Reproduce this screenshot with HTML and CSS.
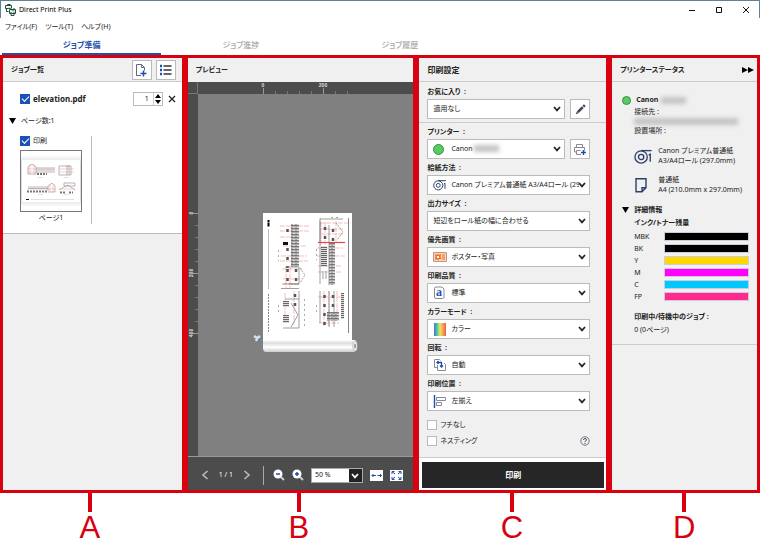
FILE: index.html
```html
<!DOCTYPE html>
<html lang="ja">
<head>
<meta charset="utf-8">
<title>Direct Print Plus</title>
<link rel="stylesheet" href="styles.css">
</head>
<body>
<svg class="defs" aria-hidden="true">
  <symbol id="chevron" viewBox="0 0 8 6"><path d="M1 1l3 3.400L7 1" fill="none" stroke="currentColor" stroke-width="1.700"/></symbol>
  <symbol id="roll" viewBox="0 0 20 17"><g fill="none" stroke="currentColor" stroke-width="1.400"><circle cx="7.500" cy="9" r="6.500"/><circle cx="7.500" cy="9" r="2.800"/><path d="M7.500 2.300H18.500"/><path d="M15.500 7l1.600-1v8"/></g></symbol>
</svg>
<header class="titlebar">
  <svg class="logo" width="11" height="12" viewBox="0 0 11 12"><g fill="#fff" stroke="#244b3c" stroke-width="1"><path d="M.5 1.500h6v3h-6zM1.500 4.500v3h2M5.500.5h-3v1"/><path d="M4.500 5.500h6v4h-6zM6 4v1.500h3V4M6 8v3.500h3V8"/></g><path d="M3.500 4.200h3M6.500 6.800h3" stroke="#2aa66a"/></svg>
  <h1>Direct Print Plus</h1>
  <div class="winbtns">
    <button aria-label="最小化"><svg width="10" height="10"><path d="M2 5.500h6" stroke="#111"/></svg></button>
    <button aria-label="最大化"><svg width="10" height="10"><path d="M2.500 2.500h5v5h-5z" fill="none" stroke="#111"/></svg></button>
    <button aria-label="閉じる"><svg width="10" height="10"><path d="M2 2l6 6M8 2L2 8" stroke="#111"/></svg></button>
  </div>
</header>
<nav class="menubar"><button>ファイル(F)</button><button>ツール(T)</button><button>ヘルプ(H)</button></nav>
<nav class="tabs"><a class="on" href="#jobs">ジョブ準備</a><a href="#progress">ジョブ進捗</a><a href="#history">ジョブ履歴</a></nav>

<main class="panels">
  <section class="panel jobs" id="jobs">
    <div class="head"><h2>ジョブ一覧</h2>
      <button class="tool" aria-label="ファイルを追加"><svg width="13" height="14" viewBox="0 0 13 14"><path d="M6 12.500H1.500v-11h5l3 3v3M6.500 1.500v3h3" fill="none" stroke="#667" /><path d="M8.500 7.500v6M5.500 10.500h6" stroke="#1b4fae" stroke-width="1.500"/></svg></button>
      <button class="tool" aria-label="一覧表示"><svg width="13" height="12" viewBox="0 0 13 12"><path d="M1 2h2M1 6h2M1 10h2" stroke="#1b4fae" stroke-width="2.500"/><path d="M4.500 2h8M4.500 6h8M4.500 10h8" stroke="#333" stroke-width="1.500"/></svg></button>
    </div>
    <div class="joblist">
      <div class="job"><label class="check"><input type="checkbox" checked><b>elevation.pdf</b></label>
        <div class="spin"><input type="text" value="1" aria-label="部数"><span class="arrows"><button aria-label="増やす"><svg width="6" height="4"><path d="M0 4l3-4 3 4z"/></svg></button><button aria-label="減らす"><svg width="6" height="4"><path d="M0 0l3 4 3-4z"/></svg></button></span></div>
        <button class="plain" aria-label="削除"><svg width="8" height="8"><path d="M1 1l6 6M7 1L1 7" stroke="#222" stroke-width="1.300"/></svg></button>
      </div>
      <button class="fold"><svg width="7" height="6"><path d="M0 0h7L3.500 6z"/></svg><span>ページ数:1</span></button>
      <figure class="page">
        <label class="check"><input type="checkbox" checked>印刷</label>
        <svg class="thumb" viewBox="0 0 60 60">
          <defs><linearGradient id="sh" x2="0" y2="1"><stop stop-color="#fff"/><stop offset=".16" stop-color="#ddd"/><stop offset=".84" stop-color="#ddd"/><stop offset="1" stop-color="#fff"/></linearGradient></defs>
          <path fill="#fff" d="M0 0h60v60H0z"/><path fill="url(#sh)" d="M0 4h60v52H0z"/><path fill="#fff" d="M1 9h58v42H1z"/>
          <g fill="none" stroke="#999" stroke-width=".7"><path d="M7 23v-7l4-3 4 3v7zM15 17h19M15 19h19M15 21h19M38 15h12v9H38zM46 14v10M48 14v10M7 36h20M7 37.500h20M27 40v-5l4-3 3 3v6h-7M38 39l5-3 4-2 7 5M43 32h11v3H43z"/></g>
          <path d="M16 23h10M6 40.500h20M39 41.500h5M48 41.500h4" stroke="#777" stroke-width="2" stroke-dasharray="2 1"/>
          <path d="M6 18h28M6 21h9M38 18h15M38 21h15M6 38h28M38 38h16M9 13v10M13 13v10M29 33v8M32 33v8" stroke="#e99" stroke-width=".5"/>
          <path d="M5 48.500h3" stroke="#111"/><path d="M10 48.500h43M17 26.500h5M43 26.500h5M17 43.500h5M43 43.500h5" stroke="#ccc" stroke-width=".6"/>
        </svg>
        <figcaption>ページ1</figcaption>
      </figure>
    </div>
  </section>

  <section class="panel preview">
    <div class="head"><h2>プレビュー</h2></div>
    <div class="stage">
      <div class="corner"></div>
      <svg class="ruler-x" width="100%" height="12"><path d="M65.500 6v6M125.500 6v6" stroke="#999"/><path d="M77.500 9v3M89.500 9v3M101.500 9v3M113.500 9v3M137.500 9v3M149.500 9v3" stroke="#777"/><g class="marks"><text x="65" y="5">0</text><text x="125" y="5">200</text></g></svg>
      <svg class="ruler-y" width="10" height="100%"><path d="M5 119.500h5M5 179.500h5M5 239.500h5" stroke="#999"/><path d="M7 131.500h3M7 143.500h3M7 155.500h3M7 167.500h3M7 191.500h3M7 203.500h3M7 215.500h3M7 227.500h3" stroke="#777"/><g class="marks"><text transform="translate(5 119) rotate(-90)">0</text><text transform="translate(5 179) rotate(-90)">200</text><text transform="translate(5 239) rotate(-90)">400</text></g></svg>
      <svg class="canvas" width="100%" height="100%" role="img" aria-label="用紙">
        <defs>
          <linearGradient id="rollg" x2="0" y2="1"><stop stop-color="#fff"/><stop offset=".25" stop-color="#ddd"/><stop offset=".6" stop-color="#fff"/><stop offset="1" stop-color="#ccc"/></linearGradient>
          <pattern id="brick" width="4" height="3" patternUnits="userSpaceOnUse"><path fill="#ddd" d="M0 0h4v3H0z"/><path d="M0 .5h4M1 0v3M3 1v1" stroke="#555" stroke-width=".7"/></pattern>
          <pattern id="rows" width="6" height="2" patternUnits="userSpaceOnUse"><path fill="#ddd" d="M0 0h6v2H0z"/><path d="M0 .5h6" stroke="#666" stroke-width="1"/></pattern>
        </defs>
        <g transform="translate(65 119)">
          <path fill="#fff" d="M0 0h89v130H0z"/>
          <path d="M5.500 7v2M5.500 9.500v4" stroke="#000" stroke-width="2"/>
          <path d="M5.500 16v60" stroke="#aaa" stroke-width=".8"/><path d="M5.500 81v38" stroke="#888" stroke-dasharray="2 1"/>
          <path d="M85.500 5v115" stroke="#666" stroke-width=".8"/>
          <g fill="none" stroke="#f4a3a3" stroke-width=".7" stroke-dasharray="5 1"><path d="M17 13h29M17 18h29M17 24h20M20 33h24M18 43h26M17 48h28M19 56h20M20 66h18M19 71h18M23 55v20M27 55v20M31 78v34M22 80v28M57 10h28M57 16h24M57 21h24M54 35h26M54 43h28M55 53h24M55 59h24M58 9v24M62 9v24M73 8v22M61 78v36M66 78v36M74 78v30M55 84h24M56 110h20"/></g>
          <path d="M55 29.500h27" stroke="#e44" stroke-width="1.200"/>
          <path fill="url(#brick)" d="M28 11h8v43h-8zM66 30h6v42h-6zM64 99h12v9H64z"/>
          <path fill="url(#rows)" d="M58 33h6v21h-6zM78 80h3v26h-3zM20 88h6v6h-6zM20 102h6v8h-6z"/>
          <path fill="#111" d="M20 29h5v3h-5z"/>
          <path fill="none" stroke="#555" stroke-width="2.500" stroke-dasharray="3 6" d="M24.500 16v4M24.500 35v20M24.500 56v13M33 56v14M62 14v14M70 16v12M61.500 82v32M70 82v18M32 81v18"/>
          <g fill="none" stroke="#777" stroke-width=".7"><path d="M22 54h14v17H20M36 78v37H20"/><path stroke-dasharray="2 1" d="M37 55l5 7-5 8M73 10l7 9-6 8"/><path d="M36 71H26M18 75.500h18M22 86h14M28 90l7 12-7 12M57 8v21M66 12v60M57 6h23M66 78v36M71 78v36M57 78v32M57 5v66M60 58v8M63 58v8"/></g>
          <path d="M15.500 37v11M41.500 86v28M53.500 36v11M15.500 92v10M53.500 92v10M68 4.500h10" stroke="#aaa" stroke-width="1" stroke-dasharray="2 3"/>
          <path fill="url(#rollg)" d="M0 127h92q2 1 2 6t-3 6H3q-3 0-3-4z"/>
          <ellipse cx="92" cy="133" rx="2.200" ry="5" fill="#eee" stroke="#aaa" stroke-width=".6"/><ellipse cx="92" cy="133" rx=".8" ry="2.500" fill="#888"/>
          <path d="M-9 123l3 2M-3 123l-4 3M-7 126l1 2" stroke="#cfe4fa" stroke-width="2.500"/>
        </g>
      </svg>
    </div>
    <div class="zoombar">
      <button class="plain pg" aria-label="前のページ"><svg width="8" height="10"><path d="M6.500 1L2 5l4.500 4" fill="none" stroke="#bbb" stroke-width="1.600"/></svg></button>
      <span class="count">1 / 1</span>
      <button class="plain pg" aria-label="次のページ"><svg width="8" height="10"><path d="M1.500 1L6 5 1.500 9" fill="none" stroke="#bbb" stroke-width="1.600"/></svg></button>
      <i class="sep"></i>
      <button class="plain" aria-label="縮小"><svg width="12" height="12"><path d="M8 8l3 3" stroke="#ccc" stroke-width="2"/><circle cx="5" cy="5" r="4.500" fill="#fff"/><path d="M3 5h4" stroke="#1b4fae" stroke-width="1.500"/></svg></button>
      <button class="plain" aria-label="拡大"><svg width="12" height="12"><path d="M8 8l3 3" stroke="#ccc" stroke-width="2"/><circle cx="5" cy="5" r="4.500" fill="#fff"/><path d="M3 5h4M5 3v4" stroke="#1b4fae" stroke-width="1.500"/></svg></button>
      <span class="zoomsel"><select aria-label="倍率"><option>50 %</option></select><svg class="zchev" width="8" height="6"><use href="#chevron"/></svg></span>
      <button class="plain fit" aria-label="幅に合わせる"><svg width="13" height="11"><path fill="#fff" d="M0 0h13v11H0z"/><path d="M2 5.500h4M7.500 5.500h4M3.500 4L2 5.500 3.500 7M10 4l1.500 1.500L10 7" fill="none" stroke="#1b4fae"/></svg></button>
      <button class="plain" aria-label="全体表示"><svg width="13" height="11"><path fill="#fff" d="M0 0h13v11H0z"/><path d="M2 4V1.500h2.500M2 1.500l3 2.500M11 4V1.500H8.500M11 1.500L8 4M2 7v2.500h2.500M2 9.500L5 7M11 7v2.500H8.500M11 9.500L8 7" fill="none" stroke="#1b4fae"/></svg></button>
    </div>
  </section>

  <section class="panel settings">
    <div class="head"><h2>印刷設定</h2></div>
    <div class="group first">
      <label for="fav">お気に入り&ensp;:</label>
      <div class="row"><span class="sel"><select id="fav"><option>適用なし</option></select><svg class="chev" width="8" height="6"><use href="#chevron"/></svg></span>
      <button class="tool" aria-label="編集"><svg width="11" height="11"><path d="M.8 10.200l1-2.800 1.800 1.800z" fill="#444"/><path d="M2.800 8.200l5-5M8.400 2.600l1.400-1.400" stroke="#445" stroke-width="2.600"/></svg></button></div>
    </div>
    <div class="group">
      <label for="prn">プリンター&ensp;:</label>
      <div class="row"><span class="sel ic"><i class="dot ico"></i><select id="prn"><option>Canon</option></select><i class="mask short"></i><svg class="chev" width="8" height="6"><use href="#chevron"/></svg></span>
      <button class="tool" aria-label="プリンターを追加"><svg width="14" height="13"><path d="M3.500 4.500v-3h6v3M3.500 9h-2V4.500h10v3M3.500 7.500v4h4.500M3.500 7.500h4" fill="none" stroke="#889"/><path d="M10.500 7v5M8 9.500h5" stroke="#1b4fae" stroke-width="1.400"/></svg></button></div>
      <label for="feed">給紙方法&ensp;:</label>
      <span class="sel ic"><svg class="ico navy" width="14" height="12"><use href="#roll"/></svg><select id="feed"><option>Canon プレミアム普通紙 A3/A4ロール (29</option></select><svg class="chev" width="8" height="6"><use href="#chevron"/></svg></span>
      <label for="size">出力サイズ&ensp;:</label>
      <span class="sel"><select id="size"><option>短辺をロール紙の幅に合わせる</option></select><svg class="chev" width="8" height="6"><use href="#chevron"/></svg></span>
      <label for="prio">優先画質&ensp;:</label>
      <span class="sel ic"><svg class="ico" width="14" height="12"><path fill="#fbd3b8" stroke="#b98" d="M.5 1.500h13v9H.5z"/><path fill="#f2691d" d="M2 3l2 1 1-1.500L6 4l2-1-.5 3L8.500 8 6 8 5 9.500 4 8 2 9l.5-3z"/><circle cx="5" cy="6" r="1.200" fill="#fff"/><path fill="#f6a06a" d="M9 3h3v6H9z"/></svg><select id="prio"><option>ポスター・写真</option></select><svg class="chev" width="8" height="6"><use href="#chevron"/></svg></span>
      <label for="qual">印刷品質&ensp;:</label>
      <span class="sel ic"><svg class="ico" width="14" height="14"><path fill="#fff" stroke="#889" d="M1.500 2.500q0-1.500 1.500-1.500h6l2 2v8q0 1.500-1.500 1.500H3q-1.500 0-1.500-1.500z"/><text x="3" y="10" font-family="Liberation Serif" font-weight="700" font-size="12" fill="#1b4fae">a</text></svg><select id="qual"><option>標準</option></select><svg class="chev" width="8" height="6"><use href="#chevron"/></svg></span>
      <label for="color">カラーモード&ensp;:</label>
      <span class="sel ic"><svg class="ico" width="14" height="13"><defs><linearGradient id="rb"><stop stop-color="#4a6fe0"/><stop offset=".25" stop-color="#4cc7a0"/><stop offset=".5" stop-color="#e8e860"/><stop offset=".75" stop-color="#f7a050"/><stop offset="1" stop-color="#ee5a50"/></linearGradient></defs><path fill="url(#rb)" d="M1 0h12v13H1z"/></svg><select id="color"><option>カラー</option></select><svg class="chev" width="8" height="6"><use href="#chevron"/></svg></span>
      <label for="rot">回転&ensp;:</label>
      <span class="sel ic"><svg class="ico" width="14" height="14"><path d="M4 9.500H1.500v-8h5l1 1" fill="none" stroke="#889"/><path d="M4.500 7v5.500h8v-6l-1.500-1.500" fill="none" stroke="#889"/><path d="M4 4.500h4.500V9M5.500 3L4 4.500 5.500 6M7 7.500L8.500 9 10 7.500" fill="none" stroke="#1b4fae" stroke-width="1.300"/></svg><select id="rot"><option>自動</option></select><svg class="chev" width="8" height="6"><use href="#chevron"/></svg></span>
      <label for="pos">印刷位置&ensp;:</label>
      <span class="sel ic"><svg class="ico" width="14" height="13"><path d="M1.500 0v13" stroke="#1b4fae" stroke-width="1.400"/><path d="M3.500 2.500h9v3h-9zM3.500 7.500h5v3h-5z" fill="#fff" stroke="#889"/></svg><select id="pos"><option>左揃え</option></select><svg class="chev" width="8" height="6"><use href="#chevron"/></svg></span>
      <div class="opts">
        <label class="check"><input type="checkbox">フチなし</label>
        <label class="check"><input type="checkbox">ネスティング</label>
        <button class="plain help" aria-label="ヘルプ"><svg width="10" height="10"><circle cx="5" cy="5" r="4.200" fill="none" stroke="#667" stroke-width=".9"/><path d="M3.500 4q0-1.500 1.500-1.500T6.500 4Q6.500 4.700 5 5.500v.7M5 7v1" fill="none" stroke="#556" stroke-width="1"/></svg></button>
      </div>
    </div>
    <div class="printrow"><button class="print">印刷</button></div>
  </section>

  <section class="panel status">
    <div class="head"><h2>プリンターステータス</h2><button class="plain" aria-label="たたむ"><svg width="12" height="6"><path d="M0 0l6 3-6 3zM6 0l6 3-6 3z"/></svg></button></div>
    <div class="info">
      <div class="name"><i class="dot"></i><b>Canon</b><i class="mask short"></i></div>
      <p>接続先 :</p>
      <i class="mask long"></i>
      <p>設置場所 :</p>
      <div class="media"><svg class="navy" width="19" height="17"><use href="#roll"/></svg><p>Canon プレミアム普通紙<br>A3/A4ロール (297.0mm)</p></div>
      <div class="media"><svg class="navy" width="19" height="17" viewBox="0 0 19 17"><path d="M2 1.700h10v9l-4 4H2zM12 10.700H8v4" fill="none" stroke="currentColor" stroke-width="1.400"/></svg><p>普通紙<br>A4 (210.0mm x 297.0mm)</p></div>
      <button class="fold"><svg width="7" height="6"><path d="M0 0h7L3.500 6z"/></svg><b>詳細情報</b></button>
      <h3>インク/トナー残量</h3>
      <dl class="inks">
        <dt>MBK</dt><dd class="k"></dd><dt>BK</dt><dd class="k"></dd><dt>Y</dt><dd class="y"></dd><dt>M</dt><dd class="m"></dd><dt>C</dt><dd class="c"></dd><dt>FP</dt><dd class="fp"></dd>
      </dl>
      <h3>印刷中/待機中のジョブ :</h3>
      <p>0 (0ページ)</p>
    </div>
  </section>
</main>
<footer class="callouts"><span>A</span><span>B</span><span>C</span><span>D</span></footer>
</body>
</html>
```
FILE: styles.css
```css
* { box-sizing: border-box; }
body {
  margin: 0;
  background: #fff;
  color: #222;
  font: 7px/12px "Noto Sans", "Noto Sans CJK JP", sans-serif;
  font-feature-settings: "palt";
}
h1, h2, h3, p, dl, dd, figure { margin: 0; }
button, input, select { font: inherit; font-feature-settings: inherit; color: inherit; margin: 0; }
button { padding: 0; border: 0; background: none; white-space: nowrap; }
svg { display: block; flex: none; }
.defs { position: absolute; width: 0; height: 0; }
.navy { color: #2b4168; }

.titlebar { display: flex; align-items: center; height: 18px; padding: 0 5px 0 4px; border: 1px solid #5f8299; border-bottom: 0; }
.titlebar h1 { flex: 1; margin-left: 3px; font-size: 7px; font-weight: 400; color: #000; }
.winbtns { display: flex; gap: 17px; margin-right: 3px; }
.menubar { display: flex; gap: 8px; height: 18px; padding-left: 5px; }
.tabs { display: flex; height: 19px; padding-left: 2px; }
.tabs a { width: 21%; text-align: center; line-height: 17px; font-size: 8px; font-weight: 500; text-decoration: none; color: #aaa; }
.tabs .on { color: #2450a8; border-bottom: 2px solid #2450a8; font-weight: 700; }

.panels { display: grid; grid-template-columns: 179fr 226fr 187fr 145fr; gap: 6px; padding: 3px; background: #d9000f; }
.panel { display: flex; flex-direction: column; min-width: 0; background: #f0f0f0; }
.head { display: flex; align-items: center; gap: 4px; height: 24px; padding: 0 7px 0 8px; border-bottom: 1px solid #ccc; }
.head h2 { flex: 1; font-size: 7px; font-weight: 700; white-space: nowrap; }
.settings .head h2 { font-size: 8px; }
.tool { display: grid; place-items: center; flex: none; width: 20px; height: 20px; border: 1px solid #bbb; background: #fff; }
.plain { display: grid; place-items: center; flex: none; }

.check { display: flex; align-items: center; gap: 3px; }
.check input { appearance: none; width: 10px; height: 10px; border: 1px solid #bbb; background: #fff; }
.check input:checked { display: grid; place-items: center; border: 0; background: #1c52b8; }
.check input:checked::after { content: ""; width: 6px; height: 3px; border: solid #fff; border-width: 0 0 1px 1px; rotate: -45deg; translate: 0 -1px; }
.fold { display: flex; align-items: center; gap: 5px; height: 12px; }
.jobs .head { padding-right: 6px; }
.joblist { height: 152px; padding: 9px 6px 0; background: #fff; border-bottom: 1px solid #bbb; }
.job { display: flex; align-items: center; height: 16px; padding-left: 11px; margin-bottom: 8px; }
.job .check { flex: 1; font-size: 8px; }
.spin { display: flex; width: 30px; height: 14px; border: 1px solid #bbb; margin-right: 5px; }
.spin input { flex: 1; min-width: 0; border: 0; padding: 0 4px; text-align: right; }
.arrows { display: flex; flex-direction: column; justify-content: space-around; width: 9px; border-left: 1px solid #ccc; padding-left: 1px; }
.page { width: 83px; height: 88px; margin-top: 9px; padding-left: 11px; border-right: 1px solid #bbb; }
.page .check { height: 10px; }
.thumb { width: 62px; height: 62px; margin-top: 4px; border: 1px solid #777; }
.page figcaption { width: 62px; text-align: center; }

.preview .head { border-bottom: 0; }
.stage { flex: 1; display: grid; grid-template: 12px 1fr / 10px 1fr; background: #808080; border-bottom: 1px solid #999; min-height: 0; }
.corner, .ruler-x, .ruler-y { background: #4c4c4c; }
.corner { border: solid #777; border-width: 0 1px 1px 0; }
.ruler-x { min-width: 0; }
.marks { fill: #ddd; font: 700 5px "Liberation Sans", sans-serif; text-anchor: middle; }
.canvas { min-width: 0; min-height: 0; }
.zoombar { display: flex; align-items: center; gap: 7px; height: 33px; padding: 3px 10px 0 12px; background: #4c4c4c; }
.count { padding: 0 2px; color: #fff; white-space: nowrap; }
.pg { width: 10px; }
.sep { width: 1px; height: 19px; margin: 0 2px 0 4px; background: #aaa; }
.zoomsel { position: relative; flex: 1; height: 15px; background: #fff; border: 1px solid #aaa; }
.zoomsel select { appearance: none; display: block; width: 100%; height: 100%; border: 0; padding: 0 3px; background: linear-gradient(#222, #222) right / 13px 100% no-repeat; }
.zchev { position: absolute; right: 3px; top: 4px; color: #fff; pointer-events: none; }

.group { padding: 0 16px 0 8px; }
.group.first { padding-top: 1px; padding-bottom: 3px; border-bottom: 1px solid #ccc; }
.group > label { display: block; height: 16px; line-height: 18px; font-weight: 700; }
.row { display: flex; gap: 5px; }
.row .sel { flex: 1; }
.sel { position: relative; display: block; height: 20px; min-width: 0; }
.sel select { appearance: none; display: block; width: 100%; height: 20px; padding: 0 10px 0 5px; border: 1px solid #bbb; border-radius: 0; background: #fff; overflow: hidden; text-overflow: clip; }
.ic select { padding-left: 23px; }
.ico { position: absolute; left: 6px; top: 0; bottom: 0; margin: auto 0; }
.chev { position: absolute; right: 4px; top: 7px; pointer-events: none; }
.dot { width: 11px; height: 11px; border: 1px solid #259a38; border-radius: 50%; background: #5fc767; }
.mask { display: block; background: #c4c4c4; filter: blur(2px); }
.sel .mask { position: absolute; left: 47px; top: 6px; }
.mask.short { width: 25px; height: 7px; }
.opts { display: grid; grid-template-columns: 1fr auto; gap: 6px; padding: 9px 0 11px; }
.opts .check { height: 10px; grid-column: 1; }
.printrow { flex: 1; padding: 4px 2px 2px 3px; background: #fff; border-top: 1px solid #ccc; }
.print { width: 100%; height: 26px; background: #262626; color: #fff; font-size: 8px; font-weight: 700; }

.status .head { padding-right: 3px; }
.info { padding: 12px 8px 8px 22px; border-bottom: 1px solid #ccc; white-space: nowrap; }
.name { display: flex; align-items: center; gap: 5px; height: 12px; margin-left: -12px; }
.name .dot { width: 9px; height: 9px; }
.name .mask { margin-left: -2px; }
.mask.long { width: 104px; height: 7px; }
.media { display: flex; gap: 5px; align-items: center; height: 20px; line-height: 10px; margin-top: 9px; }
.info .fold { margin: 9px 0 0 -12px; }
h3 { font-size: 7px; font-weight: 700; height: 14px; line-height: 14px; }
.inks { display: grid; grid-template-columns: 30px 1fr; margin: 1px 0 7px; }
.inks dt { height: 12px; }
.inks dd { height: 9px; margin-top: 1px; border: 1px solid #ccd; }
.inks .k { background: #000; }
.inks .y { background: #ffd800; }
.inks .m { background: #f0f; }
.inks .c { background: #00c8ff; }
.inks .fp { background: #ff2a8c; }

.callouts { display: grid; grid-template-columns: 179fr 226fr 187fr 145fr; gap: 6px; padding: 0 3px 0 0; color: #d9000f; font: 31px/32px "Liberation Sans", sans-serif; }
.callouts span { display: flex; flex-direction: column; align-items: center; }
.callouts span::before { content: ""; width: 4px; height: 19px; background: #d9000f; }
```
